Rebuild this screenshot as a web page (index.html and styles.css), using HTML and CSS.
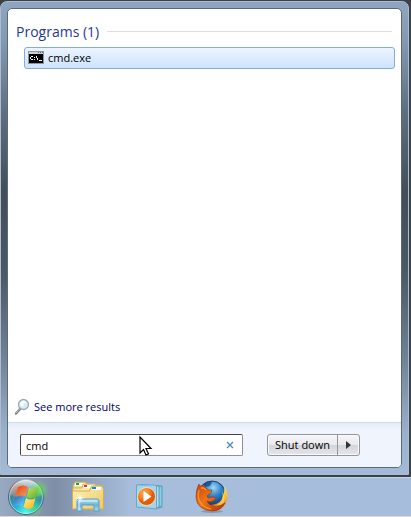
FILE: index.html
```html
<!DOCTYPE html>
<html lang="en">
<head>
    <meta charset="UTF-8">
    <meta name="viewport" content="width=device-width, initial-scale=1.0">
    <title>Start menu</title>
    <link rel="stylesheet" href="styles.css">
</head>
<body>
    <main class="start-menu">
        <div class="panel">
            <section class="results">
                <h1 class="group-title">Programs (1)</h1>
                <a class="result" href="#cmd">
                    <svg width="16" height="14" viewBox="0 0 16 14" aria-hidden="true">
                        <rect width="16" height="13" fill="#8f969b"/>
                        <rect x="1" y="1" width="14" height="2" fill="#c9ced2"/>
                        <path d="M10 1h1v1h-1zM12 1h1v1h-1zM14 1h1v1h-1z" fill="#4a6f9c"/>
                        <rect x="1" y="3" width="14" height="9" fill="#000"/>
                        <path d="M3 5h2v1H3zM2 6h1v2H2zM3 8h2v1H3zM6 6h1v1H6zM6 8h1v1H6zM8 5h1v2H8zM9 7h1v2H9zM11 9h3v1h-3z" fill="#fff"/>
                    </svg>
                    <span>cmd.exe</span>
                </a>
            </section>
            <a class="more" href="#results">
                <svg width="16" height="18" viewBox="0 0 16 18" aria-hidden="true">
                    <path d="M6 11 2 15.500" stroke="#77797e" stroke-width="2.400" stroke-linecap="round"/>
                    <path d="M5.500 11 2 15" stroke="#c3c5c9" stroke-linecap="round"/>
                    <circle cx="9.500" cy="6.500" r="5" fill="#d3ebfa" stroke="#a3a9b3" stroke-width="1.300"/>
                    <path d="M6 7a3.500 3.500 0 0 1 6-3L8 9z" fill="#f6fcff"/>
                </svg>
                <span>See more results</span>
            </a>
            <footer class="bottom">
                <div class="search">
                    <input class="search-input" type="text" value="cmd" aria-label="Search programs and files">
                    <button class="clear" type="button" aria-label="Clear">
                        <svg width="8" height="8" viewBox="0 0 8 8"><path d="M1 1l6 6M7 1 1 7" stroke="#4a8abd" stroke-width="1.300"/></svg>
                    </button>
                    <svg class="cursor" width="13" height="20" viewBox="0 0 13 20" aria-hidden="true">
                        <path d="M1 1v16l3.500-3.500 2.500 5.500 2.500-1-2.500-5.500h5z" fill="#fff" stroke="#000" stroke-width="1.200"/>
                    </svg>
                </div>
                <div class="power">
                    <button class="shutdown" type="button">Shut down</button>
                    <button class="arrow" type="button" aria-label="Power options">
                        <svg width="5" height="8" viewBox="0 0 5 8"><path d="M0 0l5 4-5 4z" fill="#333"/></svg>
                    </button>
                </div>
            </footer>
        </div>
    </main>
    <nav class="taskbar">
        <button class="task" type="button" aria-label="Start">
            <svg width="38" height="38" viewBox="0 0 38 38">
                <defs>
                    <radialGradient id="orb" cx="50%" cy="95%" r="90%">
                        <stop offset="0" stop-color="#4dfdf0"/>
                        <stop offset=".35" stop-color="#1fb9cf"/>
                        <stop offset=".7" stop-color="#3c7f9d"/>
                        <stop offset="1" stop-color="#a3b3ba"/>
                    </radialGradient>
                    <linearGradient id="gloss" x2="0" y2="1">
                        <stop offset="0" stop-color="#fff" stop-opacity=".55"/>
                        <stop offset="1" stop-color="#fff" stop-opacity=".1"/>
                    </linearGradient>
                    <radialGradient id="green"><stop offset="0" stop-color="#5cf047"/><stop offset="1" stop-color="#5cf047" stop-opacity="0"/></radialGradient>
                    <radialGradient id="red"><stop offset="0" stop-color="#fa6c3c"/><stop offset="1" stop-color="#fa6c3c" stop-opacity="0"/></radialGradient>
                    <linearGradient id="flagRed" x2="1" y2="1"><stop offset="0" stop-color="#e2421a"/><stop offset="1" stop-color="#ff9a55"/></linearGradient>
                    <linearGradient id="flagGreen" x2="1" y2="1"><stop offset="0" stop-color="#c3ea5c"/><stop offset="1" stop-color="#5aa826"/></linearGradient>
                    <linearGradient id="flagBlue" x2="1" y2="1"><stop offset="0" stop-color="#1c65bb"/><stop offset="1" stop-color="#7bd0f8"/></linearGradient>
                    <linearGradient id="flagYellow" x2="1" y2="1"><stop offset="0" stop-color="#fff07c"/><stop offset="1" stop-color="#f8ae20"/></linearGradient>
                </defs>
                <circle cx="19" cy="19" r="17.500" fill="url(#orb)" stroke="#47677a"/>
                <circle cx="19" cy="19" r="16.500" fill="none" stroke="#d6f3f8" stroke-opacity=".6"/>
                <path d="M3 17a16 16 0 0 1 32 0q-15 6-32 0z" fill="url(#gloss)"/>
                <circle cx="11" cy="13" r="10" fill="url(#red)" opacity=".6"/>
                <circle cx="32" cy="12" r="10" fill="url(#green)" opacity=".8"/>
                <circle cx="28" cy="30" r="8" fill="url(#green)" opacity=".5"/>
                <path d="M11 9q5-3 10 0l-2.500 9.500q-5-3-10 0z" fill="url(#flagRed)"/>
                <path d="M22 10q5 2 10-1l-3 10q-5 3-9.500 0z" fill="url(#flagGreen)"/>
                <path d="M8 19.500q5-3 10 0l-2.500 9q-5-3-9.500 0z" fill="url(#flagBlue)"/>
                <path d="M19 20q5 3 9.500 0l-2.500 9.500q-5 3-9.500-.5z" fill="url(#flagYellow)"/>
            </svg>
        </button>
        <button class="task" type="button" aria-label="Windows Explorer">
            <svg width="34" height="32" viewBox="0 0 34 32">
                <defs>
                    <linearGradient id="folder" x2="1" y2="1"><stop offset="0" stop-color="#fff3b5"/><stop offset="1" stop-color="#ebc864"/></linearGradient>
                    <linearGradient id="stand" x2="0" y2="1"><stop offset="0" stop-color="#b9e4f6"/><stop offset=".5" stop-color="#69b3dd"/><stop offset="1" stop-color="#a9def3"/></linearGradient>
                </defs>
                <path d="M2 27V4l2-3h11l2 3h13v24z" fill="#f0dc91" stroke="#c6a551"/>
                <path d="M4 2h10v3H4z" fill="#fff"/><path d="M5 2h3v2H5z" fill="#10a52c"/>
                <path d="M2 7h9l1-4h12l2 4v18H2z" fill="#f8e8a7" stroke="#d1b565"/>
                <path d="M13 4h9v3h-9z" fill="#fff"/><path d="M13 4h3v2h-3z" fill="#d63d25"/>
                <path d="M1.500 10h17l2-5h11l1 3v20h-31z" fill="url(#folder)" stroke="#cfaf58"/>
                <path d="M21 6h9v3h-9z" fill="#fff"/><path d="M21 6h4v2h-4z" fill="#1a86d9"/>
                <path d="M6 30V20q0-2 2-2h18q2 0 2 2v10h-5v-6H11v6z" fill="url(#stand)" stroke="#5b9fc8"/>
                <path d="M8 29v-9h18" fill="none" stroke="#dff6ff"/>
                <path d="M9 12l.7 4.300L14 17l-4.300.700L9 22l-.7-4.300L4 17l4.300-.7z" fill="#fff"/>
                <path d="M6 14l6 6M12 14l-6 6" stroke="#fff" stroke-width=".5"/>
            </svg>
        </button>
        <button class="task" type="button" aria-label="Media Player">
            <svg width="30" height="28" viewBox="0 0 30 28">
                <defs>
                    <radialGradient id="play" cx="35%" cy="30%"><stop offset="0" stop-color="#ffad5c"/><stop offset=".7" stop-color="#f47c20"/><stop offset="1" stop-color="#e05d08"/></radialGradient>
                </defs>
                <path d="M24 24h5l-6 2z" fill="#71899f" opacity=".6"/>
                <path d="M6 2l21 1v20l-5 2z" fill="#91cae2" stroke="#4d9ac0"/>
                <path d="M4 2l20 1v21l-4 2z" fill="#b7e0ef" stroke="#4d9ac0"/>
                <path d="M1.500 2h18l2 1v23l-20-2z" fill="#a5d4e9" stroke="#62a9c9"/>
                <circle cx="11.500" cy="13.500" r="9" fill="url(#play)" stroke="#fff0d9" stroke-width=".7"/>
                <path d="M8.500 8v11l8-5.500z" fill="#fff"/>
            </svg>
        </button>
        <button class="task" type="button" aria-label="Firefox">
            <svg width="34" height="34" viewBox="0 0 34 34">
                <defs>
                    <radialGradient id="globe" cx="55%" cy="25%" r="70%"><stop offset="0" stop-color="#9bdcf6"/><stop offset=".45" stop-color="#2f80c2"/><stop offset="1" stop-color="#102d70"/></radialGradient>
                    <linearGradient id="fox" x1="0" y1="0" x2="1" y2="1"><stop offset="0" stop-color="#c9440c"/><stop offset=".45" stop-color="#ec7415"/><stop offset="1" stop-color="#b52f04"/></linearGradient>
                    <linearGradient id="tail" x2="0" y2="1"><stop offset="0" stop-color="#ffe85b"/><stop offset=".5" stop-color="#f9b221"/><stop offset="1" stop-color="#d04805"/></linearGradient>
                </defs>
                <ellipse cx="17" cy="31.500" rx="11" ry="1.500" fill="#51657e" opacity=".4"/>
                <circle cx="17" cy="14.500" r="13.500" fill="url(#globe)" stroke="#174174"/>
                <path d="M9 4q4-3 8-2l-2 4-5 1z" fill="#123c79" opacity=".7"/>
                <path d="M29 6q5 7 3 14-3 10-14 11-7 0-12-5l10-1q11-1 12-9 2-5 1-10z" fill="url(#tail)"/>
                <path d="M27 11q2 8-3 12-3 3-8 3 9 3 13-4 2-5-2-11z" fill="#ffe56a" opacity=".6"/>
                <path d="M4 4Q1 9 1 17q1 13 16 14 9 0 13-8-5 4-10 3-6 0-8-5 3 2 6 0l3-2q0-2-4-2l-4 1q-2-3 1-4 3-1 3-4-4 1-6-2Q9 5 6 6 4 6 4 4z" fill="url(#fox)" stroke="#9b340a" stroke-width=".6"/>
                <path d="M4 10q-2 7 1 12 4 6 11 7" fill="none" stroke="#ff9c36" stroke-width="1.500" opacity=".7"/>
                <path d="M6 8q3-1 5 2" fill="none" stroke="#ffb75b"/>
            </svg>
        </button>
    </nav>
</body>
</html>
```
FILE: styles.css
```css
* {
    box-sizing: border-box;
}
body {
    margin: 0;
    min-height: 100vh;
    display: flex;
    flex-direction: column;
    font: 11px / 16px "Open Sans", "Noto Sans", sans-serif;
    color: #000;
    background-color: #3c4149;
}
a {
    text-decoration: none;
}
button {
    font: inherit;
    color: inherit;
    margin: 0;
    padding: 0;
    border: none;
    background: none;
    cursor: pointer;
}
svg {
    display: block;
    flex: none;
    overflow: visible;
}
.start-menu {
    flex: 1;
    display: flex;
    margin: 1px 2px 2px 0;
    padding: 6px;
    border: 1px solid #aebbc9;
    border-radius: 7px;
    border-bottom-left-radius: 0;
    border-bottom-right-radius: 0;
    background: linear-gradient(#8fa6c1 0, #8299b4 40px, #5e6f83 110px, #424e5a 190px, #4b5866 270px, #71849a 360px, #9ab1cc 430px, #a3bbd8 100%);
}
.panel {
    flex: 1;
    display: flex;
    flex-direction: column;
    border: 1px solid #5b6979;
    border-radius: 5px;
    background-color: #fff;
    overflow: hidden;
}
.results {
    flex: 1;
    padding: 12px 6px 0 8px;
}
.group-title {
    display: flex;
    align-items: center;
    gap: 8px;
    margin: 0 3px 5px 0;
    font-size: 14px;
    line-height: 21px;
    font-weight: normal;
    color: #1f3a91;
}
.group-title::after {
    content: "";
    flex: 1;
    height: 1px;
    background-color: #dfdfdf;
}
.result {
    display: flex;
    align-items: center;
    gap: 4px;
    height: 22px;
    margin-left: 8px;
    padding: 0 3px;
    color: #000;
    border: 1px solid #84acdd;
    border-radius: 3px;
    background: linear-gradient(#ecf4fe, #cfe3fd);
}
.more {
    display: flex;
    align-items: center;
    gap: 4px;
    padding: 0 6px 6px;
    color: #00006b;
}
.bottom {
    display: flex;
    justify-content: space-between;
    gap: 24px;
    padding: 11px 41px 11px 12px;
    border-top: 1px solid #cbdaea;
    background: linear-gradient(#e4ecf6, #f0f4fc 6px);
}
.search {
    flex: 1;
    position: relative;
    display: flex;
    align-items: center;
    border: 1px solid #8f8f95;
    border-top-color: #444;
    border-left-color: #444;
    border-radius: 2px;
    background-color: #fff;
}
.search-input {
    flex: 1;
    min-width: 0;
    height: 20px;
    padding: 0 5px;
    border: none;
    outline: none;
    background: none;
    font: inherit;
}
.clear {
    padding: 6px 8px;
}
/* mouse pointer resting over the search box */
.cursor {
    position: absolute;
    left: 118px;
    top: 1px;
}
.power {
    display: flex;
    border: 1px solid #92959b;
    border-radius: 3px;
    background: linear-gradient(#f6f6f8 0, #e8e9ed 50%, #d3d5db 51%, #e5e6eb 100%);
    box-shadow: inset 0 0 0 1px #fafafc;
}
.shutdown {
    padding: 0 7px;
    height: 20px;
}
.arrow {
    padding: 0 8px;
    border-left: 1px solid #92959b;
}
.taskbar {
    display: flex;
    align-items: center;
    gap: 24px;
    height: 40px;
    padding: 0 7px;
    border-top: 1px solid #c5d4e6;
    border-bottom: 1px solid #e0d9cb;
    background: linear-gradient(to right, #98a9c2 0, #7f8ea7 55px, #91a5c1 90px, #a6bedb 130px);
}
.task {
    display: flex;
    justify-content: center;
    width: 38px;
}
```
